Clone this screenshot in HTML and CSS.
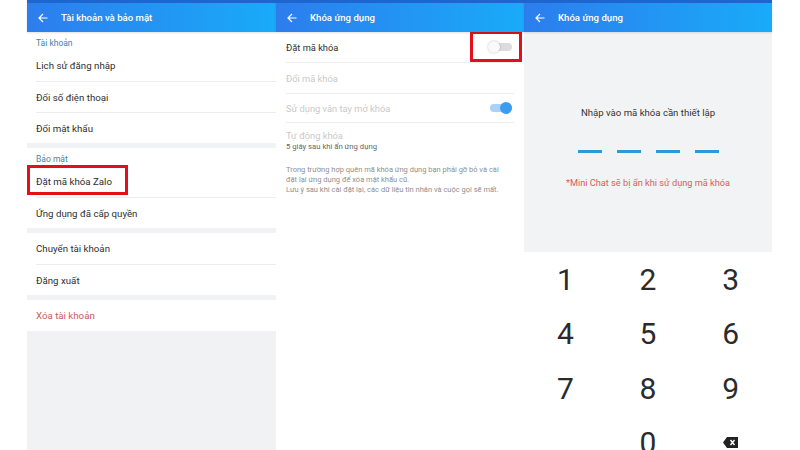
FILE: index.html
```html
<!DOCTYPE html>
<html lang="vi">
<head>
    <meta charset="UTF-8">
    <meta name="viewport" content="width=device-width, initial-scale=1.0">
    <title>Khóa ứng dụng Zalo</title>
    <link rel="stylesheet" href="styles.css">
</head>
<body>
    <div class="screens">
        <!-- Screen 1: account & security -->
        <section class="screen settings">
            <header class="appbar">
                <svg class="back" viewBox="0 0 10 10" width="10" height="10"><path d="M9.5 5H1M5 1L1 5l4 4" fill="none" stroke="#fff" stroke-width="1.2"/></svg>
                <span>Tài khoản và bảo mật</span>
            </header>
            <div class="group">
                <div class="group-label">Tài khoản</div>
                <div class="row">Lịch sử đăng nhập</div>
                <div class="row">Đổi số điện thoại</div>
                <div class="row">Đổi mật khẩu</div>
            </div>
            <div class="group">
                <div class="group-label">Bảo mật</div>
                <div class="row marked">Đặt mã khóa Zalo</div>
                <div class="row">Ứng dụng đã cấp quyền</div>
            </div>
            <div class="group">
                <div class="row">Chuyển tài khoản</div>
                <div class="row">Đăng xuất</div>
            </div>
            <div class="group">
                <div class="row danger">Xóa tài khoản</div>
            </div>
        </section>

        <!-- Screen 2: app lock options -->
        <section class="screen lock">
            <header class="appbar">
                <svg class="back" viewBox="0 0 10 10" width="10" height="10"><path d="M9.5 5H1M5 1L1 5l4 4" fill="none" stroke="#fff" stroke-width="1.2"/></svg>
                <span>Khóa ứng dụng</span>
            </header>
            <div class="opt">
                <span>Đặt mã khóa</span>
                <span class="switch marked"><span class="knob"></span></span>
            </div>
            <div class="opt off">
                <span>Đổi mã khóa</span>
            </div>
            <div class="opt off short">
                <span>Sử dụng vân tay mở khóa</span>
                <span class="switch on"><span class="knob"></span></span>
            </div>
            <div class="opt off tall">
                <span>Tự động khóa</span>
                <span class="sub">5 giây sau khi ẩn ứng dụng</span>
            </div>
            <p class="note">
                Trong trường hợp quên mã khóa ứng dụng bạn phải gỡ bỏ và cài
                đặt lại ứng dụng để xóa mật khẩu cũ.<br>
                Lưu ý sau khi cài đặt lại, các dữ liệu tin nhắn và cuộc gọi sẽ mất.
            </p>
        </section>

        <!-- Screen 3: pin entry -->
        <section class="screen pin">
            <header class="appbar">
                <svg class="back" viewBox="0 0 10 10" width="10" height="10"><path d="M9.5 5H1M5 1L1 5l4 4" fill="none" stroke="#fff" stroke-width="1.2"/></svg>
                <span>Khóa ứng dụng</span>
            </header>
            <div class="pin-area">
                <div class="pin-title">Nhập vào mã khóa cần thiết lập</div>
                <div class="dashes">
                    <span></span><span></span><span></span><span></span>
                </div>
                <div class="pin-hint">*Mini Chat sẽ bị ẩn khi sử dụng mã khóa</div>
            </div>
            <div class="keypad">
                <span>1</span><span>2</span><span>3</span>
                <span>4</span><span>5</span><span>6</span>
                <span>7</span><span>8</span><span>9</span>
                <span></span><span>0</span>
                <span class="del">
                    <svg viewBox="0 0 15 11" width="15" height="11"><path d="M4 0H15V11H4L0 5.5Z" fill="#222"/><path d="M7.5 3l4 5M11.5 3l-4 5" stroke="#fff" stroke-width="1.4"/></svg>
                </span>
            </div>
        </section>
    </div>
</body>
</html>
```

FILE: styles.css
```css
body {
    margin: 0;
    background: #fff;
    font-family: 'Roboto', 'Noto Sans', sans-serif;
    color: #2e2e2e;
}
.screens {
    display: flex;
    padding-left: 27px;
    height: 450px;
    overflow: hidden;
}
.screen {
    height: 450px;
    display: flex;
    flex-direction: column;
    background: #fff;
}
.settings {
    width: 249px;
    background: #f1f2f4;
}
.lock,
.pin {
    width: 248px;
}
.appbar {
    height: 32px;
    flex-shrink: 0;
    box-sizing: border-box;
    border-top: 3px solid #1d66cf;
    background: linear-gradient(90deg, #2d7ded, #19abf9);
    box-shadow: 0 1px 2px rgba(0, 0, 0, 0.12);
    display: flex;
    align-items: center;
    gap: 13px;
    padding-left: 11px;
    color: #fff;
    font-size: 9.6px;
    font-weight: 500;
    position: relative;
    z-index: 1;
}
.back {
    flex-shrink: 0;
}

/* settings list */
.group {
    background: #fff;
    margin-bottom: 5px;
}
.group-label {
    height: 18px;
    display: flex;
    align-items: flex-end;
    padding: 0 0 1px 9px;
    box-sizing: border-box;
    font-size: 8.5px;
    line-height: 11px;
    color: #3f83b3;
}
.row {
    height: 31px;
    box-sizing: border-box;
    margin-left: 9px;
    display: flex;
    align-items: center;
    font-size: 9.7px;
    position: relative;
}
.row + .row {
    border-top: 1px solid #ededed;
}
.row.danger {
    color: #c65a66;
}
.row.marked::after {
    content: '';
    position: absolute;
    left: -9px;
    top: -1px;
    width: 101px;
    height: 30px;
    box-sizing: border-box;
    border: 3px solid #e3101b;
}

/* lock options */
.opt {
    height: 30px;
    margin: 0 10px;
    box-sizing: border-box;
    display: flex;
    align-items: center;
    justify-content: space-between;
    font-size: 9.3px;
}
.opt + .opt {
    border-top: 1px solid #ededed;
}
.opt.off {
    height: 31px;
    color: #c9c9c9;
}
.opt.short {
    height: 29px;
}
.opt.tall {
    height: 36px;
    flex-direction: column;
    align-items: flex-start;
    justify-content: flex-start;
    padding-top: 7px;
    line-height: 12px;
}
.sub {
    font-size: 7.7px;
    line-height: 10px;
    color: #666;
}
.switch {
    width: 24px;
    height: 12px;
    margin-right: 2px;
    position: relative;
    display: flex;
    align-items: center;
}
.switch::before {
    content: '';
    position: absolute;
    left: 2px;
    right: 0;
    height: 8px;
    border-radius: 4px;
    background: #dcdcdc;
}
.knob {
    width: 12px;
    height: 12px;
    border-radius: 50%;
    background: #fafafa;
    box-shadow: 0 0 2px rgba(0, 0, 0, 0.3);
    position: relative;
}
.switch.on::before {
    background: #aad1f6;
}
.switch.on .knob {
    margin-left: auto;
    background: #3c9cf0;
    box-shadow: none;
}
.switch.marked::after {
    content: '';
    position: absolute;
    left: -18px;
    top: -10px;
    width: 52px;
    height: 31px;
    box-sizing: border-box;
    border: 3px solid #e3101b;
}
.note {
    margin: 7px 14px 0 10px;
    font-size: 7.5px;
    line-height: 10px;
    color: #8f8f8f;
}

/* pin entry */
.pin-area {
    height: 220px;
    flex-shrink: 0;
    background: #f2f3f5;
    display: flex;
    flex-direction: column;
    align-items: center;
    padding-top: 74px;
    box-sizing: border-box;
}
.pin-title {
    font-size: 9.6px;
    line-height: 14px;
    color: #333;
}
.dashes {
    display: flex;
    gap: 15px;
    margin-top: 30px;
}
.dashes span {
    width: 24px;
    height: 3px;
    background: #2c9ad9;
}
.pin-hint {
    margin-top: 24px;
    font-size: 9.2px;
    line-height: 12px;
    color: #df5a63;
}
.keypad {
    display: grid;
    grid-template-columns: repeat(3, 1fr);
    grid-auto-rows: 54.5px;
}
.keypad span {
    display: flex;
    align-items: center;
    justify-content: center;
    font-size: 30px;
    color: #2b2b2b;
}
```
